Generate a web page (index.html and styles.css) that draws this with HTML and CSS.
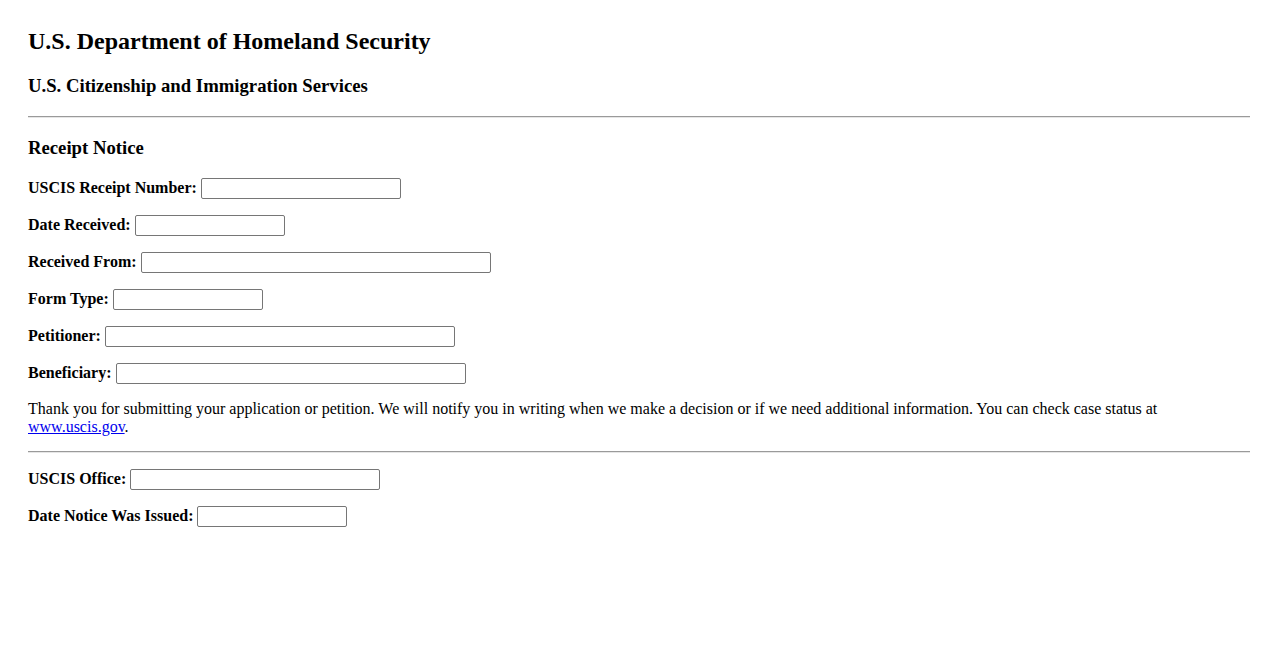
FILE: index.html
```html
<!DOCTYPE html>
<html lang="en">
<head>
<meta charset="utf-8">
<title>Receipt Notice</title>
<link rel="stylesheet" href="styles.css">
</head>
<body>
<h1 class="agency">U.S. Department of Homeland Security</h1>
<h2 class="bureau">U.S. Citizenship and Immigration Services</h2>
<hr class="rule">
<h3 class="notice-title">Receipt Notice</h3>
<p class="row"><label class="lbl" for="rn">USCIS Receipt Number:</label> <input id="rn" class="field w200" type="text"></p>
<p class="row"><label class="lbl" for="dr">Date Received:</label> <input id="dr" class="field w150" type="text"></p>
<p class="row"><label class="lbl" for="rf">Received From:</label> <input id="rf" class="field w350" type="text"></p>
<p class="row"><label class="lbl" for="ft">Form Type:</label> <input id="ft" class="field w150" type="text"></p>
<p class="row"><label class="lbl" for="pe">Petitioner:</label> <input id="pe" class="field w350" type="text"></p>
<p class="row"><label class="lbl" for="be">Beneficiary:</label> <input id="be" class="field w350" type="text"></p>
<p class="message">Thank you for submitting your application or petition. We will notify you in writing when we make a decision or if we need additional information. You can check case status at <a href="#">www.uscis.gov</a>.</p>
<hr class="rule">
<p class="row"><label class="lbl" for="of">USCIS Office:</label> <input id="of" class="field w250" type="text"></p>
<p class="row"><label class="lbl" for="di">Date Notice Was Issued:</label> <input id="di" class="field w150" type="text"></p>
</body>
</html>
```
FILE: styles.css
```css
body {
  margin: 8px;
  padding: 20px;
  font-family: "Liberation Serif", "Times New Roman", serif;
  font-size: 16px;
  color: #000;
  background: #fff;
}
.agency {
  font-size: 24px;
  margin: 0;
}
.bureau {
  font-size: 18.72px;
  margin: 20px 0 19px;
}
.notice-title {
  font-size: 18.72px;
  margin: 19px 0 19px;
}
.rule {
  height: 0;
  border: 0;
  border-top: 1px solid #9a9a9a;
  border-bottom: 1px solid #e6e6e6;
  margin: 0;
}
.row {
  margin: 16px 0;
}
.lbl {
  font-weight: bold;
}
.field {
  box-sizing: border-box;
  height: 21px;
  border: 1px solid #767676;
  border-radius: 2px;
  padding: 1px 2px;
  font: 13px "Liberation Sans", Arial, sans-serif;
  vertical-align: baseline;
}
.w150 { width: 150px; }
.w200 { width: 200px; }
.w250 { width: 250px; }
.w350 { width: 350px; }
.message {
  margin: 16px 0 15px;
}
.message a {
  color: #0000ee;
}
```
